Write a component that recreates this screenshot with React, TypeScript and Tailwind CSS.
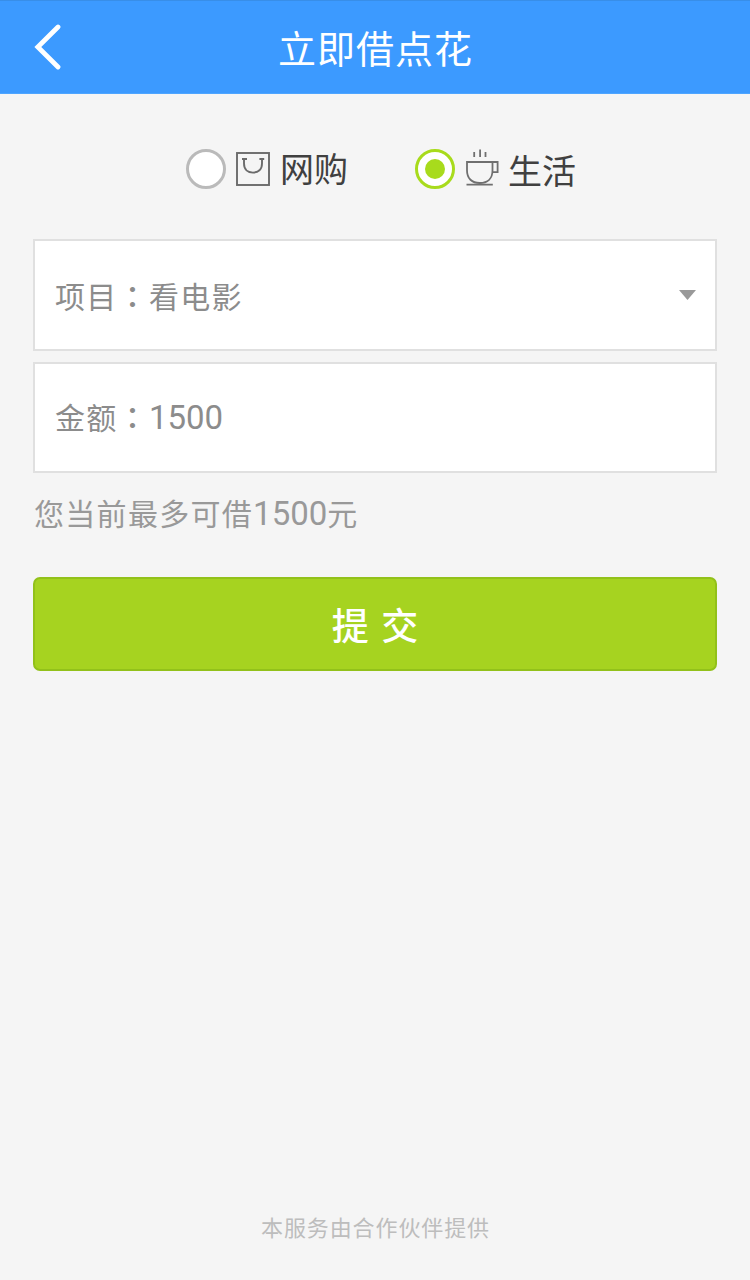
import { useState } from 'react';
import clsx from 'clsx';

type Kind = 'shop' | 'life';

const MAX_AMOUNT = 1500;

function BagIcon() {
  return (
    <svg width="34" height="34" viewBox="0 0 34 34" fill="none" stroke="#6b6b6b" strokeWidth="1.9" className="shrink-0">
      <rect x="1" y="1" width="32" height="32" />
      <path d="M6 7H11M23.4 7H28.2M8 7V11.6C8 17.6 11.8 20.6 17 20.6C22.2 20.6 26 17.6 26 11.6V7" />
    </svg>
  );
}

function CupIcon() {
  return (
    <svg width="34" height="38" viewBox="0 0 34 38" fill="none" stroke="#6f6f6f" strokeWidth="1.8" className="shrink-0">
      <path d="M8.2 3V8M14.1 0.5V8M19.5 3V8" />
      <path d="M1 13H26.5V21.5C26.5 29.5 21.5 34 13.7 34C6 34 1 29.5 1 21.5Z" />
      <path d="M26.5 13H31.6V23.2H26.5M0.5 35.6H26.8" />
    </svg>
  );
}

function Radio({ checked }: { checked: boolean }) {
  return (
    <span
      className={clsx(
        'flex h-10 w-10 shrink-0 items-center justify-center rounded-full border-[3px] bg-white',
        checked ? 'border-[#a8db1c]' : 'border-[#bababa]'
      )}
    >
      {checked && <span className="h-5 w-5 rounded-full bg-[#a8db1c]" />}
    </span>
  );
}

// full-width colon centred in its cell
function Colon() {
  return <span className="font-['Noto_Sans_CJK_TC',sans-serif] font-medium" lang="zh-TW">：</span>;
}

function Num({ value }: { value: number }) {
  return <span className="text-[33px] leading-none tracking-normal font-[Roboto,sans-serif]">{value}</span>;
}

export default function App() {
  const [kind, setKind] = useState<Kind>('life');

  return (
    <div lang="zh-CN" className="flex min-h-[1280px] w-full flex-col bg-[#f5f5f5] font-['Noto_Sans_CJK_SC',sans-serif]">
      <header className="grid h-[94px] shrink-0 grid-cols-[100px_1fr_100px] items-center border-t border-b border-t-[#388ee8] border-b-[#4ea5ff] bg-[#3c9aff] text-white">
        <button className="pl-[34px]" aria-label="返回">
          <svg width="28" height="46" viewBox="0 0 28 46" fill="none" stroke="#fff" strokeWidth="4.8" strokeLinecap="round" strokeLinejoin="miter">
            <path d="M24 3L3.8 23L24 43" />
          </svg>
        </button>
        <h1 className="pl-px text-center text-[38px] leading-none tracking-[1px]">立即借点花</h1>
      </header>

      <main className="flex flex-col px-[33px]">
        <div className="mt-[54px] flex h-[42px] items-center pl-[153px] text-[34px] leading-none text-[#404040]">
          <button onClick={() => setKind('shop')} className="flex w-[229px] items-center">
            <Radio checked={kind === 'shop'} />
            <span className="ml-[10px]"><BagIcon /></span>
            <span className="-mt-[2px] ml-[10px]">网购</span>
          </button>
          <button onClick={() => setKind('life')} className="flex items-center">
            <Radio checked={kind === 'life'} />
            <span className="-mt-[3px] ml-[11px]"><CupIcon /></span>
            <span className="mt-[2px] ml-[8px]">生活</span>
          </button>
        </div>

        <div className="mt-[49px] flex h-[112px] items-center justify-between border-2 border-[#e0e0e0] bg-white pr-[19px] pl-5 text-[30px] leading-none tracking-[1.3px] text-[#8c8c8c]">
          <span>项目<Colon />看电影</span>
          <svg width="17" height="10" viewBox="0 0 17 10" fill="#999">
            <path d="M0 0H17L8.5 10Z" />
          </svg>
        </div>

        <div className="mt-[11px] flex h-[111px] items-center border-2 border-[#e0e0e0] bg-white pl-5 text-[30px] leading-none tracking-[1.3px] text-[#8c8c8c]">
          <span>金额<Colon /><Num value={1500} /></span>
        </div>

        <p className="mt-[20px] h-[38px] pl-px text-[30px] leading-[38px] tracking-[1.3px] text-[#999]">
          您当前最多可借<Num value={MAX_AMOUNT} />元
        </p>

        <button className="mt-[46px] h-[94px] rounded-[7px] border-2 border-[#92c11a] bg-[#a6d320] text-[37px] leading-none font-medium text-white">
          <span className="[word-spacing:4px]">提 交</span>
        </button>
      </main>

      <footer className="mt-auto pb-[42px] pl-px text-center text-[22px] leading-[24px] tracking-[0.9px] text-[#bdbdbd]">
        本服务由合作伙伴提供
      </footer>
    </div>
  );
}
